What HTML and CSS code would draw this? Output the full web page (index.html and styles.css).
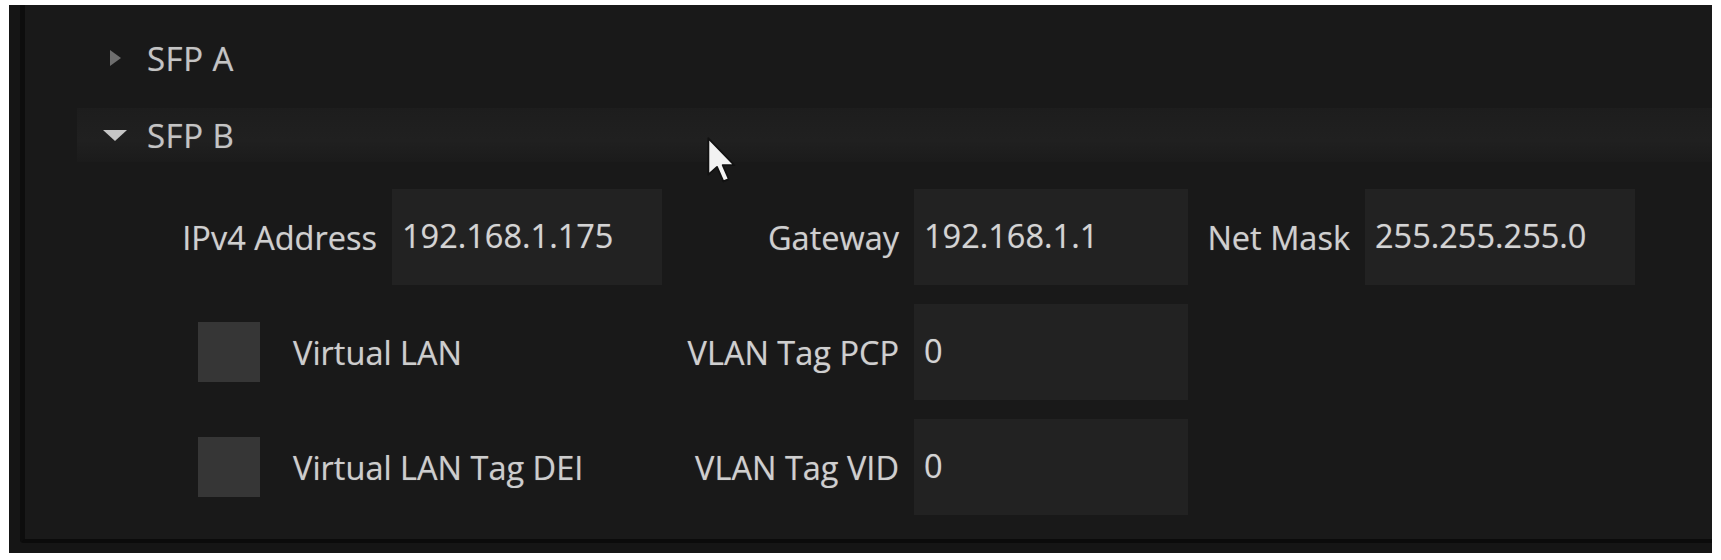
FILE: index.html
```html
<!DOCTYPE html>
<html>

<head>
    <title>SFP Network Settings</title>
    <link rel="stylesheet" href="styles.css">
</head>

<body>
    <div class="frame">
        <div class="panel">
            <!-- Collapsed section -->
            <div class="tree-row">
                <span class="caret caret-right"></span>
                <span class="tree-label">SFP A</span>
            </div>
            <!-- Expanded section -->
            <div class="tree-row open">
                <span class="caret caret-down"></span>
                <span class="tree-label">SFP B</span>
            </div>

            <div class="fields">
                <label class="lbl">IPv4 Address</label>
                <div class="box">192.168.1.175</div>
                <label class="lbl">Gateway</label>
                <div class="box">192.168.1.1</div>
                <label class="lbl">Net Mask</label>
                <div class="box">255.255.255.0</div>

                <div class="check-cell"><span class="check"></span><span>Virtual LAN</span></div>
                <label class="lbl">VLAN Tag PCP</label>
                <div class="box">0</div>

                <div class="check-cell"><span class="check"></span><span>Virtual LAN Tag DEI</span></div>
                <label class="lbl">VLAN Tag VID</label>
                <div class="box">0</div>
            </div>
        </div>

        <!-- Mouse pointer -->
        <svg class="cursor" viewBox="0 0 14 22" width="32" height="50">
            <path d="M1 1 L1 17 L4.8 13.6 L7.6 20 L10 19 L7.3 12.8 L12.4 12.8 Z" fill="#f2f2f2" stroke="#111" stroke-width="0.8" stroke-linejoin="round"/>
        </svg>
    </div>
</body>

</html>
```

FILE: styles.css
```css
body {
    margin: 0;
    padding: 0;
    background-color: #fff;
    font-family: "Open Sans", "Noto Sans", sans-serif;
    overflow: hidden;
}

.frame {
    position: relative;
    display: flex;
    height: 548px;
    margin: 5px 9px 0 9px;
    background-color: #151515;
}

.panel {
    flex: 1;
    height: 538px;
    margin-left: 11px;
    padding-top: 26px;
    box-sizing: border-box;
    border-left: 5px solid #0d0d0d;
    border-bottom: 4px solid #0b0b0b;
    border-bottom-left-radius: 4px;
    background-color: #191919;
    color: #cdcdcd;
    text-shadow: 0 0 1px rgba(210, 210, 210, 0.45);
}

.tree-row {
    display: flex;
    align-items: center;
    height: 54px;
    margin-left: 52px;
    padding-left: 25px;
}

.tree-row + .tree-row {
    margin-top: 23px;
}

.tree-row.open {
    background: linear-gradient(#1d1d1d, #202020 60%, #1b1b1b);
}

.caret {
    display: flex;
    justify-content: center;
    width: 26px;
    margin-right: 19px;
}

.caret::before {
    content: "";
    display: block;
    width: 0;
    height: 0;
}

.caret-right::before {
    border-left: 11px solid #6e6e6e;
    border-top: 8px solid transparent;
    border-bottom: 8px solid transparent;
}

.caret-down::before {
    border-top: 11px solid #c6c6c6;
    border-left: 12px solid transparent;
    border-right: 12px solid transparent;
}

.tree-label {
    font-size: 33px;
    letter-spacing: 0.5px;
    color: #c4c4c4;
}

.fields {
    display: grid;
    grid-template-columns: 211px 270px 252px 274px 177px 270px;
    grid-auto-rows: 96px;
    row-gap: 19px;
    margin-top: 27px;
    margin-left: 156px;
    font-size: 32.5px;
}

.lbl {
    display: flex;
    align-items: center;
    justify-content: flex-end;
    padding-right: 15px;
    white-space: nowrap;
    color: #cfcfcf;
}

.box {
    display: flex;
    align-items: center;
    padding: 0 0 4px 10px;
    background-color: #222;
    color: #d4d4d4;
}

.check-cell {
    grid-column: 1 / span 2;
    display: flex;
    align-items: center;
    gap: 33px;
    padding-left: 17px;
    white-space: nowrap;
}

.check {
    width: 62px;
    height: 60px;
    background-color: #363636;
}

.cursor {
    position: absolute;
    left: 697px;
    top: 131px;
}
```
